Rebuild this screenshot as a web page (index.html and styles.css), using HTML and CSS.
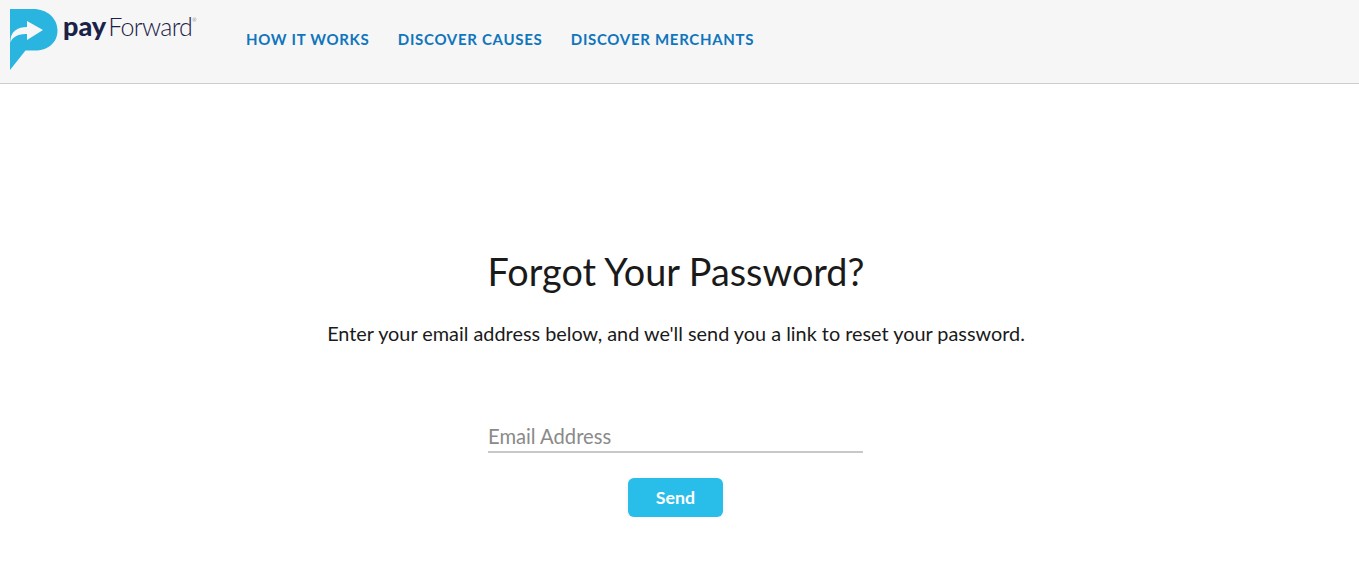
FILE: index.html
```html
<!DOCTYPE html>
<html lang="en">
<head>
    <meta charset="UTF-8">
    <meta name="viewport" content="width=device-width, initial-scale=1.0">
    <title>Forgot Your Password? - payForward</title>
    <link rel="stylesheet" href="styles.css">
</head>

<body>
    <header class="site-header">
        <a class="logo" href="#">
            <svg class="logo-mark" width="48" height="61" viewBox="0 0 48 61">
                <path class="logo-p" d="M0 0H23C37.500 0 47.500 9.500 47.500 21.500C47.500 34 37.500 41.500 25 41.500H15.500L0 61Z"/>
                <path class="logo-arrow" d="M0.500 34C1.500 29 7.500 24.500 17 25V31L33 21L17 12V18C8 18 1 22 0.500 31Z"/>
            </svg>
            <span class="logo-text"><b>pay</b>Forward<sup>®</sup></span>
        </a>
        <nav class="main-nav">
            <a href="#">HOW IT WORKS</a>
            <a href="#">DISCOVER CAUSES</a>
            <a href="#">DISCOVER MERCHANTS</a>
        </nav>
    </header>

    <main class="forgot">
        <h1>Forgot Your Password?</h1>
        <p>Enter your email address below, and we'll send you a link to reset your password.</p>
        <form class="forgot-form">
            <input type="email" placeholder="Email Address">
            <button type="button">Send</button>
        </form>
    </main>
</body>
</html>
```

FILE: styles.css
```css
body {
    margin: 0;
    font-family: 'Lato', sans-serif;
    background: #fff;
    color: #1a1a1a;
}

.site-header {
    display: flex;
    height: 83px;
    background: #f6f6f6;
    border-bottom: 1px solid #ccc;
}

.logo {
    display: flex;
    width: 236px;
    padding: 9px 0 0 10px;
    box-sizing: border-box;
    color: #1b2248;
    text-decoration: none;
}

.logo-mark {
    flex: none;
}

.logo-p {
    fill: #29b5e0;
}

.logo-arrow {
    fill: #f6f6f6;
}

.logo-text {
    margin: 2px 0 0 5px;
    font-size: 25px;
    font-weight: 300;
    line-height: 30px;
    letter-spacing: -0.7px;
    white-space: nowrap;
}

.logo-text b {
    font-size: 27px;
    font-weight: 900;
    letter-spacing: 0;
    margin-right: 2px;
}

.logo-text sup {
    font-size: 5px;
    line-height: 0;
    vertical-align: 14px;
}

.main-nav {
    display: flex;
    align-items: flex-start;
    gap: 28.3px;
    padding: 30px 0 0 10px;
}

.main-nav a {
    color: #0f75bc;
    font-size: 15px;
    font-weight: 700;
    line-height: 19px;
    letter-spacing: 0.7px;
    text-decoration: none;
}

.forgot {
    width: 720px;
    margin-left: 316px;
    padding-top: 164px;
    text-align: center;
}

.forgot h1 {
    margin: 0;
    font-size: 37.8px;
    font-weight: 400;
    line-height: 48px;
}

.forgot p {
    margin: 24px 0 0;
    font-size: 19.85px;
    line-height: 26px;
}

.forgot-form {
    display: flex;
    flex-direction: column;
    align-items: center;
    gap: 25px;
    margin: 75px 1px 0 0;
}

.forgot-form input {
    width: 375px;
    height: 30px;
    padding: 0;
    border: 0;
    border-bottom: 2px solid #c8c8c8;
    background: none;
    font-family: inherit;
    font-size: 20.2px;
    box-sizing: content-box;
    outline: none;
}

.forgot-form input::placeholder {
    color: #8a8a8a;
    opacity: 1;
}

.forgot-form button {
    width: 95px;
    height: 39px;
    padding: 0 0 2px;
    border: 0;
    border-radius: 6px;
    background: #29bdea;
    box-shadow: 0 1px 4px rgba(0, 0, 0, 0.08);
    color: #fff;
    font-family: inherit;
    font-size: 17.8px;
    font-weight: 700;
}
```
